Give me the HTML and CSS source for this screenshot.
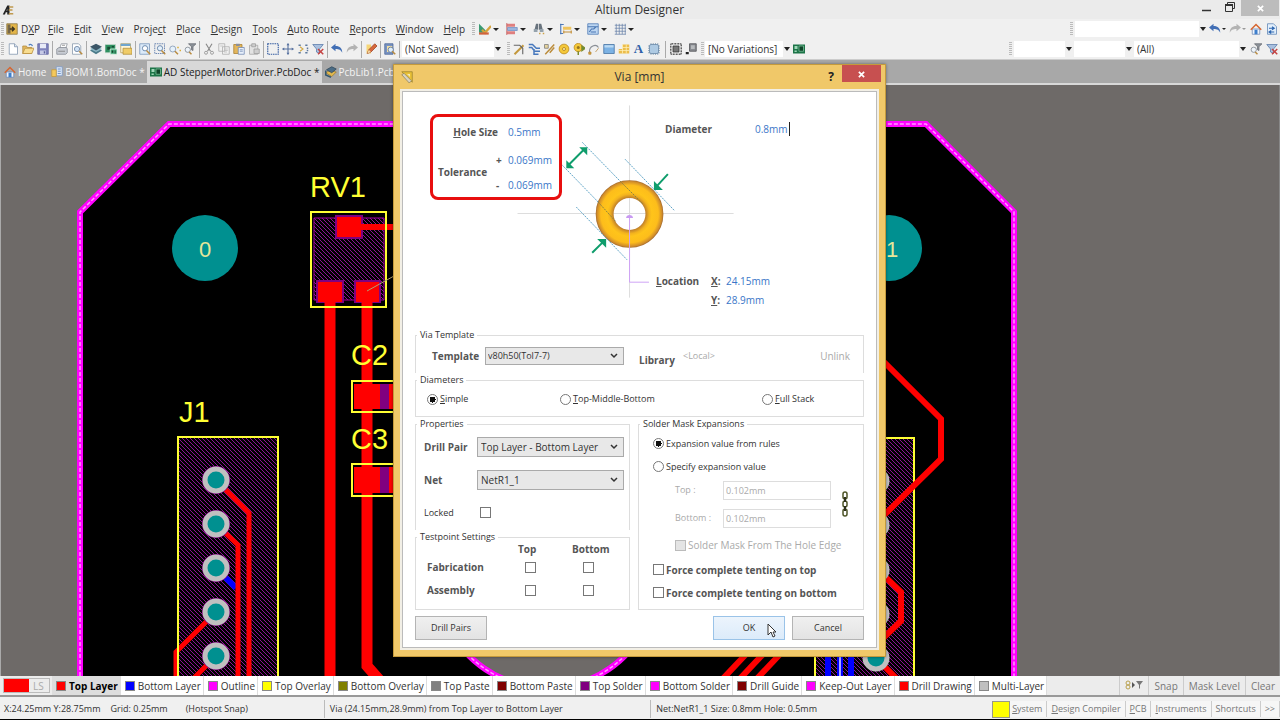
FILE: index.html
```
<!DOCTYPE html>
<html lang="en">
<head>
<meta charset="utf-8">
<title>Altium Designer</title>
<link rel="stylesheet" href="styles.css">
</head>
<body>

<!-- icon sprite -->
<svg class="sprite" width="0" height="0" aria-hidden="true">
<symbol id="i-logo" viewBox="0 0 16 16"><path d="M1 14L7 2h3v12H7v-3H5l-1 3z" fill="#222"/><path d="M9 3h6v2h-5zM9 7h5v2H9zM9 12h6v2H9z" fill="#c09a50"/><path d="M6 9l1-3v3z" fill="#ddd"/></symbol>
<symbol id="i-dxp" viewBox="0 0 16 16"><path d="M1 1h14v14H1z" fill="#e3b548" stroke="#8a7440"/><path d="M2 2h4v12H2z" fill="#75674a"/><path d="M5 8h5M8 5l3 3-3 3" fill="none" stroke="#3c3420" stroke-width="2"/></symbol>
<symbol id="i-new" viewBox="0 0 16 16"><path d="M3 1h7l4 4v10H3z" fill="#fff" stroke="#7d91ab"/><path d="M10 1v4h4" fill="#dbe5f0" stroke="#7d91ab"/></symbol>
<symbol id="i-open" viewBox="0 0 16 16"><path d="M1 14V4h5l1 2h6v8z" fill="#e3b85e" stroke="#b08a3c"/><path d="M1 14l3-7h12l-3 7z" fill="#f8dd90" stroke="#b98f3e"/><path d="M9 3c2-2 4-1 5 1" fill="none" stroke="#4f7fc0" stroke-width="1.5"/></symbol>
<symbol id="i-save" viewBox="0 0 16 16"><path d="M1 1h14v14H1z" fill="#7f83bd" stroke="#5d629c"/><path d="M4 1h8v6H4z" fill="#e8ebf7"/><path d="M4 10h8v5H4z" fill="#c6cae6"/><path d="M9 11h2v3H9z" fill="#5d629c"/></symbol>
<symbol id="i-print" viewBox="0 0 16 16"><path d="M5 7l2-6h8l-2 6z" fill="#fff" stroke="#8b9099"/><path d="M1 8l3-2h10l1 2v5l-2 2H1z" fill="#c8ccd3" stroke="#838892"/><path d="M3 11h9M8 3h4" stroke="#777"/></symbol>
<symbol id="i-preview" viewBox="0 0 16 16"><path d="M2 1h8l3 3v11H2z" fill="#fff" stroke="#8495aa"/><circle cx="8" cy="8" r="3.500" fill="#cfe2f5" stroke="#627a99"/><path d="M11 11l4 4" stroke="#b98b3f" stroke-width="2"/></symbol>
<symbol id="i-layers" viewBox="0 0 16 16"><path d="M0 10l8-4 8 4-8 5z" fill="#4c7c8a"/><path d="M0 8l8-4 8 4-8 4z" fill="#8bb7c5"/><path d="M0 5l8-4 8 4-8 5z" fill="#3c5768"/></symbol>
<symbol id="i-board" viewBox="0 0 16 16"><path d="M0 2h14v11H0z" fill="#2f9061" stroke="#c5dacd"/><path d="M3 5h4v4H3zM9 4h3v2H9z" fill="#154b32"/><path d="M7 8h9v7H7z" fill="#44aa7a" stroke="#e3f4e9"/><path d="M9 10h2v3H9zM13 10h1v4h-1z" fill="#123f2a"/></symbol>
<symbol id="i-panel" viewBox="0 0 16 16"><path d="M1 1h13v12H1z" fill="#fff8da" stroke="#b69c53"/><path d="M1 1h13v3H1z" fill="#70a6cf"/><path d="M4 7h12v8H4z" fill="#f0cc68" stroke="#ad8d3c"/></symbol>
<symbol id="i-zoomfit" viewBox="0 0 16 16"><path d="M1 1h13v14H1z" fill="#dceaf8" stroke="#7392b8"/><circle cx="8" cy="7" r="3.500" fill="#fff" stroke="#496d99"/><path d="M10 10l5 5" stroke="#b98b3f" stroke-width="2"/></symbol>
<symbol id="i-zoomarea" viewBox="0 0 16 16"><path d="M1 1h13v13H1z" fill="none" stroke="#4568a0" stroke-dasharray="2 1"/><circle cx="8" cy="7" r="3.500" fill="#e6f1fb" stroke="#496d99"/><path d="M10 10l5 5" stroke="#b98b3f" stroke-width="2"/></symbol>
<symbol id="i-zoomsel" viewBox="0 0 16 16"><circle cx="5" cy="8" r="4" fill="#e6f1fb" stroke="#7c92ad"/><path d="M8 11l4 4" stroke="#b98b3f" stroke-width="2"/><path d="M11 5h2v2h-2zM14 9h2v2h-2z" fill="#d9ad39"/></symbol>
<symbol id="i-zoomfilter" viewBox="0 0 16 16"><path d="M6 1h10l-4 4v5l-2-1V5z" fill="#8c9299" stroke="#656a70"/><circle cx="5" cy="9" r="3.500" fill="#eef4fa" stroke="#777f88"/><path d="M7 12l3 3" stroke="#b98b3f" stroke-width="2"/></symbol>
<symbol id="i-cut" viewBox="0 0 16 16"><path d="M4 1l6 10M12 1L6 11" stroke="#888" stroke-width="1.500"/><circle cx="4" cy="13" r="2" fill="none" stroke="#888"/><circle cx="12" cy="13" r="2" fill="none" stroke="#888"/></symbol>
<symbol id="i-copy" viewBox="0 0 16 16"><path d="M1 1h8v10H1zM6 5h9v10H6z" fill="#f2f2f2" stroke="#aaa"/><path d="M8 8h5M8 10h5M8 12h4M3 4h4" stroke="#bbb"/></symbol>
<symbol id="i-paste" viewBox="0 0 16 16"><path d="M1 2h11v12H1z" fill="#e3b65a" stroke="#a77d31"/><path d="M4 1h5v3H4z" fill="#8c8f99"/><path d="M7 6h8v9H7z" fill="#e8f0fb" stroke="#6d86b0"/><path d="M9 9h4M9 11h4" stroke="#6d86b0"/></symbol>
<symbol id="i-stamp" viewBox="0 0 16 16"><path d="M2 3h11v12H2z" fill="#e3e3e3" stroke="#a4a4a4"/><path d="M5 1h5v4H5zM8 8h7v6H8z" fill="#cfcfcf" stroke="#9b9b9b"/></symbol>
<symbol id="i-select" viewBox="0 0 16 16"><path d="M1 1h14v14H1z" fill="none" stroke="#335ba0" stroke-width="1.500" stroke-dasharray="2 1"/></symbol>
<symbol id="i-move" viewBox="0 0 16 16"><path d="M8 1v14M1 8h14" stroke="#5872a0" stroke-width="1.500"/><path d="M8 0l2 3H6zM8 16l2-3H6zM0 8l3-2v4zM16 8l-3-2v4z" fill="#5872a0"/></symbol>
<symbol id="i-desel" viewBox="0 0 16 16"><path d="M2 3h3M2 13h3M11 3h3M11 13h3M13 7h2M13 10h2" stroke="#5f7a9d" stroke-width="2"/><path d="M4 5l4 3-4 3" fill="none" stroke="#d2a944" stroke-width="1.500"/></symbol>
<symbol id="i-clear" viewBox="0 0 16 16"><path d="M1 2h14l-5 6v6l-4-2V8z" fill="#a9c0df" stroke="#5879a8"/><path d="M8 8l7 7M15 8l-7 7" stroke="#c54444" stroke-width="2"/></symbol>
<symbol id="i-undo" viewBox="0 0 16 16"><path d="M0 6l6-5v3c6 0 9 3 9 9-2-4-4-5-9-5v3z" fill="#426fb5"/></symbol>
<symbol id="i-redo" viewBox="0 0 16 16"><path d="M16 6l-6-5v3C4 4 1 7 1 13c2-4 4-5 9-5v3z" fill="#b3b3b3"/></symbol>
<symbol id="i-pencil" viewBox="0 0 16 16"><path d="M2 2h6v12H2z" fill="#f6d678"/><path d="M3 14l2-5 8-8 3 3-8 8z" fill="#d7683c" stroke="#9c4324"/><path d="M3 14l2-5 3 3z" fill="#f2d7a4"/></symbol>
<symbol id="i-browse" viewBox="0 0 16 16"><path d="M1 1h11v14H1z" fill="#7993c2" stroke="#4a6497"/><path d="M4 4h7v8H4z" fill="#f2dfa3"/><circle cx="9" cy="9" r="3.500" fill="#dfeefb" stroke="#506a8d"/><path d="M11 11l4 4" stroke="#b98b3f" stroke-width="2"/></symbol>
<symbol id="i-chart" viewBox="0 0 16 16"><path d="M0 1l9 9v3H0z" fill="#3a9a72"/><path d="M4 9l4 4 8-9" fill="none" stroke="#d6a43c" stroke-width="3"/><path d="M0 14h13" stroke="#d0633c" stroke-width="3"/></symbol>
<symbol id="i-align" viewBox="0 0 16 16"><path d="M1 1h11v4H1zM1 11h11v4H1z" fill="#df7f7f"/><path d="M2 6h13v4H2z" fill="#9bb5dd" stroke="#6d8fc4"/><path d="M1 0v16" stroke="#c15858"/></symbol>
<symbol id="i-find" viewBox="0 0 16 16"><path d="M2 9l2-8h3v8zM8 9V1h3l2 8z" fill="#68737d"/><path d="M1 8h5v4H1zM9 8h5v4H9z" fill="#95a2ac"/><path d="M8 13h2v2H8zM13 13h2v2h-2z" fill="#cda248"/></symbol>
<symbol id="i-dim" viewBox="0 0 16 16"><path d="M1 1v14M0 2h5M0 14h4" stroke="#4d79b9" stroke-width="1.500"/><path d="M4 5h11v4H4z" fill="#efc45e"/><path d="M5 12h10M5 10v4M15 10v4" stroke="#c38d34" stroke-width="1.500"/></symbol>
<symbol id="i-room" viewBox="0 0 16 16"><path d="M1 1h14v14H1z" fill="#bcd5f1" stroke="#4a77b3"/><path d="M1 5h14M3 12l3-4h3l3-3M5 12h7" fill="none" stroke="#4a77b3" stroke-width="1.500"/></symbol>
<symbol id="i-grid" viewBox="0 0 16 16"><path d="M3 1v14M7 1v14M11 1v14M15 1v14M1 3h15M1 7h15M1 11h15M1 15h15" stroke="#6a83aa"/></symbol>
<symbol id="i-route" viewBox="0 0 16 16"><path d="M2 15L14 3" fill="none" stroke="#c3983c" stroke-width="2.500"/><path d="M1 3h8l4 4v8" fill="none" stroke="#666" stroke-width="1.500"/></symbol>
<symbol id="i-multi" viewBox="0 0 16 16"><path d="M1 2h5l5 5h5M1 6h4l4 5h7M8 8v7h6" fill="none" stroke="#4778bd" stroke-width="2"/></symbol>
<symbol id="i-diff" viewBox="0 0 16 16"><path d="M3 15L15 2M9 13l6-7" stroke="#bb8c3b" stroke-width="2"/><path d="M2 2h5v5H2z" fill="#e6d39d" stroke="#777"/></symbol>
<symbol id="i-pad" viewBox="0 0 16 16"><circle cx="8" cy="8" r="6.500" fill="#f4c83a" stroke="#b98614"/><circle cx="8" cy="8" r="2" fill="#fff2b5" stroke="#a67613"/></symbol>
<symbol id="i-via" viewBox="0 0 16 16"><circle cx="7" cy="6" r="5.500" fill="#f4c83a" stroke="#b98614"/><circle cx="7" cy="6" r="2" fill="#96751f"/><path d="M12 4l4 3-4 3zM7 11v5" fill="#3b914f" stroke="#7d8a2f" stroke-width="2"/></symbol>
<symbol id="i-arc" viewBox="0 0 16 16"><path d="M2 13C1 3 11 1 14 6" fill="none" stroke="#8a8f96" stroke-width="1.500"/><path d="M10 12l4-5M1 12h3v3H1z" fill="#d39f35" stroke="#b98b3f"/></symbol>
<symbol id="i-fill" viewBox="0 0 16 16"><path d="M1 2h14v12H1z" fill="#7cb2e4" stroke="#3f6e9f"/><path d="M2 3h12v3H2z" fill="#bcdaf3"/></symbol>
<symbol id="i-poly" viewBox="0 0 16 16"><path d="M6 2h9v12H1V8h5z" fill="#ecbd4b"/><path d="M1 10h14M6 6h9M6 2v12M11 2v12" stroke="#fff0b7"/></symbol>
<symbol id="i-chip" viewBox="0 0 16 16"><path d="M4 0v16M7 0v16M10 0v16M13 0v16M0 4h16M0 7h16M0 10h16M0 13h16" stroke="#7d95ae"/><rect x="2" y="2" width="12" height="12" rx="2" fill="#aecae3" stroke="#6686a5"/></symbol>
<symbol id="i-comp" viewBox="0 0 16 16"><path d="M1 1h14v14H1z" fill="none" stroke="#333" stroke-width="2" stroke-dasharray="1 1"/><path d="M4 4h8v8H4z" fill="#777" stroke="#333"/></symbol>
<symbol id="i-part" viewBox="0 0 16 16"><path d="M6 1h9v10H6z" fill="#888b90" stroke="#4c4e52"/><path d="M8 3h5v5H8z" fill="#b7babd"/><path d="M1 12h4v3H1z" fill="#222"/></symbol>
<symbol id="i-home" viewBox="0 0 16 16"><path d="M3 8h10v7H3z" fill="#f1f5fc" stroke="#6b85b2"/><path d="M6 9h4v6H6z" fill="#3e7fcc"/><path d="M1 9l7-7 7 7" fill="none" stroke="#d66631" stroke-width="2"/></symbol>
<symbol id="i-docs" viewBox="0 0 16 16"><path d="M2 1h8l4 4v10H2z" fill="#e3effb" stroke="#5981b3"/><path d="M4 7h6M8 5l3 2-3 2M11 12H5M7 10l-3 2 3 2" fill="none" stroke="#2d66b1" stroke-width="1.500"/></symbol>
<symbol id="i-bom" viewBox="0 0 16 16"><path d="M7 1h8v12H7z" fill="#dbe7f7" stroke="#7a97c4"/><path d="M9 4h4M9 7h4M9 10h4" stroke="#4d7ab9"/><path d="M1 5h6v9H1z" fill="#f4c95e" stroke="#c59a39"/></symbol>
<symbol id="i-pcb" viewBox="0 0 16 16"><path d="M0 2h16v12H0z" fill="#1d7448"/><path d="M2 4h4v4H2zM2 10h3v2H2z" fill="#9fd7b8"/><path d="M8 4h6v7H8z" fill="#0f4529" stroke="#7fc49e"/></symbol>
<symbol id="i-lib" viewBox="0 0 16 16"><path d="M1 9l5-3 9 2-6 6z" fill="#e1b84f" stroke="#9c7b2c"/><path d="M2 5l7-4 6 3-6 5z" fill="#4b6c85" stroke="#2e4658"/><path d="M1 6v6l7 3" fill="none" stroke="#34576e" stroke-width="2"/></symbol>
<symbol id="i-ruler" viewBox="0 0 16 16"><path d="M1 1h14v14z" fill="#e9c136" stroke="#98802d"/><path d="M8 4h4v4z" fill="#f6e8b0"/><path d="M1 5l3-2 10 10-3 3z" fill="#d9d2c0" stroke="#8e8158"/></symbol>
</svg>

<header class="titlebar">
<svg class="icon"><use href="#i-logo"/></svg>
<h1>Altium Designer</h1>
<div class="window-buttons">
<button type="button" aria-label="Minimize"><svg viewBox="0 0 10 10" width="10" height="10"><path d="M0 8.500h9" stroke="#333" stroke-width="1.500"/></svg></button>
<button type="button" aria-label="Restore"><svg viewBox="0 0 10 10" width="10" height="10"><path d="M2.500 2V.5h7v6H8" fill="none" stroke="#333"/><path d="M.5 3h7v6.500h-7z" fill="none" stroke="#333"/><path d="M0 3h8" stroke="#333" stroke-width="2"/></svg></button>
<button type="button" class="window-close" aria-label="Close"><svg viewBox="0 0 8 8" width="7" height="7"><path d="M1 1l6 6M7 1L1 7" stroke="#fff" stroke-width="2"/></svg></button>
</div>
</header>

<nav class="menubar">
<span class="grip"></span>
<button type="button" class="menu menu-dxp"><svg class="icon"><use href="#i-dxp"/></svg><span>D<u>X</u>P</span></button>
<button type="button" class="menu"><u>F</u>ile</button>
<button type="button" class="menu"><u>E</u>dit</button>
<button type="button" class="menu"><u>V</u>iew</button>
<button type="button" class="menu">Proje<u>c</u>t</button>
<button type="button" class="menu"><u>P</u>lace</button>
<button type="button" class="menu"><u>D</u>esign</button>
<button type="button" class="menu"><u>T</u>ools</button>
<button type="button" class="menu"><u>A</u>uto Route</button>
<button type="button" class="menu"><u>R</u>eports</button>
<button type="button" class="menu"><u>W</u>indow</button>
<button type="button" class="menu"><u>H</u>elp</button>
<span class="grip menu-grip"></span>
<button type="button" class="tool drop" aria-label="Utilities"><svg class="icon"><use href="#i-chart"/></svg></button>
<button type="button" class="tool drop" aria-label="Align"><svg class="icon"><use href="#i-align"/></svg></button>
<button type="button" class="tool drop" aria-label="Find"><svg class="icon"><use href="#i-find"/></svg></button>
<button type="button" class="tool drop" aria-label="Dimensions"><svg class="icon"><use href="#i-dim"/></svg></button>
<button type="button" class="tool drop" aria-label="Rooms"><svg class="icon"><use href="#i-room"/></svg></button>
<button type="button" class="tool drop" aria-label="Grids"><svg class="icon"><use href="#i-grid"/></svg></button>
<div class="bar-end">
<span class="grip"></span>
<select class="combo combo-address" aria-label="Address"><option></option></select>
<button type="button" class="tool drop nav-drop" aria-label="Back"><svg class="icon"><use href="#i-undo"/></svg></button>
<button type="button" class="tool drop nav-drop off" aria-label="Forward"><svg class="icon"><use href="#i-redo"/></svg></button>
<button type="button" class="tool" aria-label="Home page"><svg class="icon"><use href="#i-home"/></svg></button>
<button type="button" class="tool" aria-label="Documents"><svg class="icon"><use href="#i-docs"/></svg></button>
</div>
</nav>

<div class="toolbar">
<span class="grip"></span>
<button type="button" class="tool" aria-label="New"><svg class="icon"><use href="#i-new"/></svg></button>
<button type="button" class="tool" aria-label="Open"><svg class="icon"><use href="#i-open"/></svg></button>
<button type="button" class="tool" aria-label="Save"><svg class="icon"><use href="#i-save"/></svg></button>
<span class="sep"></span>
<button type="button" class="tool" aria-label="Print"><svg class="icon"><use href="#i-print"/></svg></button>
<button type="button" class="tool" aria-label="Print preview"><svg class="icon"><use href="#i-preview"/></svg></button>
<span class="sep"></span>
<button type="button" class="tool" aria-label="Layers"><svg class="icon"><use href="#i-layers"/></svg></button>
<button type="button" class="tool" aria-label="Board"><svg class="icon"><use href="#i-board"/></svg></button>
<button type="button" class="tool" aria-label="Panels"><svg class="icon"><use href="#i-panel"/></svg></button>
<span class="sep"></span>
<button type="button" class="tool" aria-label="Fit document"><svg class="icon"><use href="#i-zoomfit"/></svg></button>
<button type="button" class="tool" aria-label="Zoom area"><svg class="icon"><use href="#i-zoomarea"/></svg></button>
<button type="button" class="tool" aria-label="Zoom selected"><svg class="icon"><use href="#i-zoomsel"/></svg></button>
<button type="button" class="tool" aria-label="Zoom filtered"><svg class="icon"><use href="#i-zoomfilter"/></svg></button>
<span class="sep"></span>
<button type="button" class="tool" aria-label="Cut"><svg class="icon"><use href="#i-cut"/></svg></button>
<button type="button" class="tool" aria-label="Copy"><svg class="icon"><use href="#i-copy"/></svg></button>
<button type="button" class="tool" aria-label="Paste"><svg class="icon"><use href="#i-paste"/></svg></button>
<button type="button" class="tool" aria-label="Rubber stamp"><svg class="icon"><use href="#i-stamp"/></svg></button>
<span class="sep"></span>
<button type="button" class="tool" aria-label="Select"><svg class="icon"><use href="#i-select"/></svg></button>
<button type="button" class="tool" aria-label="Move"><svg class="icon"><use href="#i-move"/></svg></button>
<button type="button" class="tool" aria-label="Deselect"><svg class="icon"><use href="#i-desel"/></svg></button>
<button type="button" class="tool" aria-label="Clear filter"><svg class="icon"><use href="#i-clear"/></svg></button>
<span class="sep"></span>
<button type="button" class="tool" aria-label="Undo"><svg class="icon"><use href="#i-undo"/></svg></button>
<button type="button" class="tool" aria-label="Redo"><svg class="icon"><use href="#i-redo"/></svg></button>
<span class="sep"></span>
<button type="button" class="tool" aria-label="Cross probe"><svg class="icon"><use href="#i-pencil"/></svg></button>
<span class="sep"></span>
<button type="button" class="tool" aria-label="Browse"><svg class="icon"><use href="#i-browse"/></svg></button>
<span class="sep"></span>
<select class="combo combo-view" aria-label="View"><option>(Not Saved)</option></select>
<span class="grip"></span>
<button type="button" class="tool" aria-label="Route"><svg class="icon"><use href="#i-route"/></svg></button>
<button type="button" class="tool" aria-label="Multi route"><svg class="icon"><use href="#i-multi"/></svg></button>
<button type="button" class="tool" aria-label="Differential pair"><svg class="icon"><use href="#i-diff"/></svg></button>
<button type="button" class="tool" aria-label="Pad"><svg class="icon"><use href="#i-pad"/></svg></button>
<button type="button" class="tool" aria-label="Via"><svg class="icon"><use href="#i-via"/></svg></button>
<button type="button" class="tool" aria-label="Arc"><svg class="icon"><use href="#i-arc"/></svg></button>
<button type="button" class="tool" aria-label="Fill"><svg class="icon"><use href="#i-fill"/></svg></button>
<button type="button" class="tool" aria-label="Polygon"><svg class="icon"><use href="#i-poly"/></svg></button>
<button type="button" class="tool tool-text">A</button>
<button type="button" class="tool" aria-label="Component"><svg class="icon"><use href="#i-chip"/></svg></button>
<span class="sep wide"></span>
<button type="button" class="tool" aria-label="Select component"><svg class="icon"><use href="#i-comp"/></svg></button>
<button type="button" class="tool" aria-label="Place part"><svg class="icon"><use href="#i-part"/></svg></button>
<span class="sep-space"></span>
<span class="grip"></span>
<select class="combo combo-variant" aria-label="Variant"><option>[No Variations]</option></select>
<button type="button" class="tool" aria-label="Variant board"><svg class="icon"><use href="#i-pcb"/></svg></button>
<div class="bar-end">
<span class="grip"></span>
<select class="combo combo-small" aria-label="Filter net"><option></option></select>
<select class="combo combo-small" aria-label="Filter component"><option></option></select>
<select class="combo combo-all" aria-label="Filter"><option>(All)</option></select>
<button type="button" class="tool" aria-label="Apply filter"><svg class="icon"><use href="#i-zoomfilter"/></svg></button>
<button type="button" class="tool" aria-label="Remove filter"><svg class="icon"><use href="#i-clear"/></svg></button>
</div>
</div>

<nav class="doc-tabs">
<a href="#home" class="doc-tab"><svg class="icon"><use href="#i-home"/></svg>Home</a>
<a href="#bom" class="doc-tab"><svg class="icon"><use href="#i-bom"/></svg>BOM1.BomDoc *</a>
<a href="#pcb" class="doc-tab active"><svg class="icon"><use href="#i-pcb"/></svg>AD StepperMotorDriver.PcbDoc *</a>
<a href="#lib" class="doc-tab"><svg class="icon"><use href="#i-lib"/></svg>PcbLib1.PcbLib</a>
</nav>

<main class="workspace">
<svg class="board" viewBox="0 85 1280 591" preserveAspectRatio="xMidYMid slice" role="img" aria-label="PCB layout">
<defs>
<pattern id="hatch" width="4" height="4" patternUnits="userSpaceOnUse"><path d="M-1 -1l6 6M-1 3l2 2M3 -1l2 2" stroke="#8c1494" stroke-width="1"/></pattern>
</defs>
<path d="M80 700V212L169 124H926L1014 212V700z" fill="#000"/>
<circle cx="547" cy="578" r="110" fill="#6e6a68"/>
<g fill="none">
<path d="M80 700V212L169 124H926L1014 212V700" stroke="#f0f" stroke-width="6"/>
<path d="M80 700V212L169 124H926L1014 212V700" stroke="#ff9cff" stroke-width="1.500" stroke-dasharray="4 2"/>
<circle cx="547" cy="578" r="110" stroke="#f0f" stroke-width="6"/>
<circle cx="547" cy="578" r="110" stroke="#ff9cff" stroke-width="1.500" stroke-dasharray="4 2"/>
</g>

<!-- mounting holes -->
<circle cx="205" cy="248" r="33" fill="#009090"/>
<circle cx="889" cy="248" r="33" fill="#009090"/>

<!-- RV1 -->
<path d="M314 218h70v82h-70z" fill="url(#hatch)" stroke="#a000a0"/>
<path d="M335 215h28v24h-28zM316 280h28v23h-28zM354 280h27v23h-27z" fill="#800080"/>
<g fill="none" stroke="#f00" stroke-width="11">
<path d="M330 292V700"/>
<path d="M367 292V666L390 692"/>
<path d="M350 227h50" stroke-width="6"/>
</g>
<path d="M337 217h24v20h-24zM318 282h24v20h-24zM356 282h23v20h-23z" fill="#f00"/>
<path d="M311 212h75v95h-75z" fill="none" stroke="#ff3" stroke-width="2"/>
<path d="M367 291l27-15" stroke="#b0a070"/>

<!-- C2, C3 -->
<path d="M354 384h50v25h-50zM354 467h50v26h-50z" fill="#f00"/>
<path d="M380 384h9v25h-9zM380 467h9v26h-9z" fill="#800080"/>
<path d="M352 381h60v31h-60zM352 464h60v32h-60z" fill="none" stroke="#ff3" stroke-width="2"/>

<!-- J1 -->
<path d="M178 437h100v260H178z" fill="url(#hatch)"/>
<g fill="none" stroke="#f00" stroke-width="5">
<path d="M216 568l20 20" stroke="#00f" stroke-width="6"/>
<path d="M216 480l33 33V700"/>
<path d="M216 524l22 21V700"/>
<path d="M216 612l-40 40V700"/>
<path d="M216 656l-30 30"/>
</g>
<path d="M178 437h100v260H178z" fill="none" stroke="#ff3" stroke-width="2"/>
<g fill="#009090" stroke="#c0c0c0" stroke-width="5">
<g stroke="#800080" stroke-width="10"><circle cx="216" cy="480" r="9"/><circle cx="216" cy="524" r="9"/><circle cx="216" cy="568" r="9"/><circle cx="216" cy="612" r="9"/><circle cx="216" cy="656" r="9"/></g>
<circle cx="216" cy="480" r="11"/><circle cx="216" cy="524" r="11"/><circle cx="216" cy="568" r="11"/><circle cx="216" cy="612" r="11"/><circle cx="216" cy="656" r="11"/>
</g>

<!-- right connector -->
<path d="M815 438h99v260h-99z" fill="url(#hatch)"/>
<path d="M815 438h99v260h-99z" fill="none" stroke="#ff3" stroke-width="2"/>
<path d="M828 630v60M840 630v60M851 630v60" stroke="#00f" stroke-width="6"/>
<path d="M840 630v60" stroke="#aaf" stroke-width="2"/>
<g fill="none" stroke="#f00" stroke-width="6">
<path d="M870 348l71 71v40l-71 70"/>
<path d="M876 568l25 24v29l-25 24"/>
<path d="M876 658l30 30M750 650l-34 36M767 650l-34 36M784 650l-34 36"/>
</g>
<g fill="#009090" stroke="#c0c0c0" stroke-width="5">
<circle cx="876" cy="481" r="11"/><circle cx="876" cy="525" r="11"/><circle cx="876" cy="570" r="11"/><circle cx="876" cy="614" r="11"/><circle cx="876" cy="658" r="11"/>
</g>

<!-- designators -->
<g class="designator">
<text x="310" y="197">RV1</text>
<text x="351" y="365">C2</text>
<text x="351" y="449">C3</text>
<text x="179" y="422">J1</text>
</g>
<g class="hole-number">
<text x="199" y="257">0</text>
<text x="886" y="257">1</text>
</g>
</svg>
</main>

<nav class="layer-tabs">
<button type="button" class="layer-set"><span></span>LS</button>
<button type="button" class="layer active"><i class="swatch red"></i>Top Layer</button>
<button type="button" class="layer"><i class="swatch blue"></i>Bottom Layer</button>
<button type="button" class="layer"><i class="swatch magenta"></i>Outline</button>
<button type="button" class="layer"><i class="swatch yellow"></i>Top Overlay</button>
<button type="button" class="layer"><i class="swatch olive"></i>Bottom Overlay</button>
<button type="button" class="layer"><i class="swatch gray"></i>Top Paste</button>
<button type="button" class="layer"><i class="swatch maroon"></i>Bottom Paste</button>
<button type="button" class="layer"><i class="swatch purple"></i>Top Solder</button>
<button type="button" class="layer"><i class="swatch magenta"></i>Bottom Solder</button>
<button type="button" class="layer"><i class="swatch maroon"></i>Drill Guide</button>
<button type="button" class="layer"><i class="swatch magenta"></i>Keep-Out Layer</button>
<button type="button" class="layer"><i class="swatch red"></i>Drill Drawing</button>
<button type="button" class="layer"><i class="swatch silver"></i>Multi-Layer</button>
<div class="layer-actions">
<button type="button" aria-label="Filter options"><svg viewBox="0 0 18 10" width="18" height="10"><circle cx="3" cy="3" r="2" fill="none" stroke="#b8a04c"/><circle cx="3" cy="7" r="2" fill="none" stroke="#b8a04c"/><path d="M7 2l3 3-3 3z" fill="#555"/><path d="M11 1h7l-3 4v4l-1-1V5z" fill="#777"/></svg></button>
<button type="button">Snap</button>
<button type="button">Mask Level</button>
<button type="button">Clear</button>
</div>
</nav>

<footer class="statusbar">
<div class="pane pane-pos"><span>X:24.25mm Y:28.75mm</span><span>Grid: 0.25mm</span><span class="snap">(Hotspot Snap)</span></div>
<div class="pane pane-via">Via (24.15mm,28.9mm) from Top Layer to Bottom Layer</div>
<div class="pane">Net:NetR1_1 Size: 0.8mm Hole: 0.5mm</div>
<div class="panels">
<span class="marker"></span>
<button type="button"><u>S</u>ystem</button>
<button type="button"><u>D</u>esign Compiler</button>
<button type="button"><u>P</u>CB</button>
<button type="button"><u>I</u>nstruments</button>
<button type="button">Shortcuts</button>
<button type="button">&gt;&gt;</button>
</div>
</footer>

<form class="dialog" role="dialog" aria-labelledby="dialog-title">
<div class="dialog-title">
<svg class="icon"><use href="#i-ruler"/></svg>
<h2 id="dialog-title">Via [mm]</h2>
<button type="button" class="help">?</button>
<button type="button" class="dialog-close" aria-label="Close"><svg viewBox="0 0 8 8" width="7" height="7"><path d="M1 1l6 6M7 1L1 7" stroke="#fff" stroke-width="2"/></svg></button>
</div>
<div class="dialog-body">

<div class="via-figure">
<svg class="via-drawing" viewBox="403 92 475 237" aria-hidden="true">
<defs>
<radialGradient id="copper" gradientUnits="userSpaceOnUse" cx="630.5" cy="214" r="34">
<stop offset=".46" stop-color="#b8782c"/><stop offset=".58" stop-color="#f3b31e"/><stop offset=".66" stop-color="#ffc41a"/><stop offset=".85" stop-color="#fdbd1b"/><stop offset=".96" stop-color="#cf8b2b"/><stop offset="1" stop-color="#9f682e"/>
</radialGradient>
</defs>
<path d="M630.500 105v193M518 213.500h217" stroke="#ddd"/>
<circle cx="630.5" cy="214" r="25" fill="none" stroke="url(#copper)" stroke-width="18"/>
<g stroke="#5fa3c6" stroke-width="1" stroke-dasharray="2 1">
<path d="M626 159l50 52M577 207l51 53M583 142l38 39M562 164l37 38"/>
<path d="M621 181l23 23M599 202l18 20" stroke="#8a8340"/>
</g>
<g fill="#0f9d6c" stroke="#0f9d6c" stroke-width="2">
<path d="M569 165l16-16M669 174l-12 13M593 253l12-12"/>
<path d="M588 147v8l-8-8zM567 168v-8l8 8zM655 190v-9l9 9zM607 239v9l-9-9z" stroke="none"/>
</g>
<path d="M630.500 217v65.500H650" fill="none" stroke="#cfa3f5"/>
<path d="M627 218c0-4 7-4 7 0z" fill="#c99af2"/>
</svg>

<div class="hole-box">
<label class="hole-label" for="hole"><u>H</u>ole Size</label>
<input id="hole" type="text" value="0.5mm">
<span class="tolerance">Tolerance</span>
<label for="tol-plus">+</label>
<input id="tol-plus" type="text" value="0.069mm">
<label for="tol-minus">-</label>
<input id="tol-minus" type="text" value="0.069mm">
</div>

<div class="diameter">
<label for="diameter">Diameter</label>
<input id="diameter" type="text" value="0.8mm">
</div>

<div class="location">
<span class="location-name"><u>L</u>ocation</span>
<label for="loc-x"><u>X</u>:</label>
<input id="loc-x" type="text" value="24.15mm">
<label for="loc-y"><u>Y</u>:</label>
<input id="loc-y" type="text" value="28.9mm">
</div>
</div>

<fieldset class="group open-bottom template">
<legend>Via Template</legend>
<label class="strong" for="template">Template</label>
<select id="template" class="field"><option>v80h50(Tol7-7)</option></select>
<span class="strong library">Library</span>
<span class="local">&lt;Local&gt;</span>
<button type="button" class="unlink" disabled>Unlink</button>
</fieldset>

<fieldset class="group diameters">
<legend>Diameters</legend>
<label><input type="radio" name="diameters" checked><span><u>S</u>imple</span></label>
<label><input type="radio" name="diameters"><span><u>T</u>op-Middle-Bottom</span></label>
<label><input type="radio" name="diameters"><span><u>F</u>ull Stack</span></label>
</fieldset>

<div class="columns">
<div class="column">
<fieldset class="group open-bottom properties">
<legend>Properties</legend>
<label class="strong" for="drill-pair">Drill Pair</label>
<select id="drill-pair" class="field big"><option>Top Layer - Bottom Layer</option></select>
<label class="strong" for="net">Net</label>
<select id="net" class="field big"><option>NetR1_1</option></select>
<label for="locked">Locked</label>
<input id="locked" type="checkbox">
</fieldset>

<fieldset class="group testpoints">
<legend>Testpoint Settings</legend>
<table>
<thead><tr><td></td><th scope="col">Top</th><th scope="col">Bottom</th></tr></thead>
<tbody>
<tr><th scope="row">Fabrication</th><td><input type="checkbox" aria-label="Fabrication top"></td><td><input type="checkbox" aria-label="Fabrication bottom"></td></tr>
<tr><th scope="row">Assembly</th><td><input type="checkbox" aria-label="Assembly top"></td><td><input type="checkbox" aria-label="Assembly bottom"></td></tr>
</tbody>
</table>
</fieldset>
</div>

<fieldset class="group mask">
<legend>Solder Mask Expansions</legend>
<label><input type="radio" name="expansion" checked>Expansion value from rules</label>
<label><input type="radio" name="expansion">Specify expansion value</label>
<div class="expansion">
<label for="exp-top">Top :</label>
<input id="exp-top" type="text" value="0.102mm" disabled>
<svg class="chain" viewBox="0 0 8 26" width="8" height="26" aria-hidden="true"><g fill="none" stroke="#4f5628" stroke-width="1.500"><rect x="2" y="1" width="4" height="7" rx="2"/><rect x="2" y="18" width="4" height="7" rx="2"/><rect x="2" y="10" width="4" height="6" rx="2"/><path d="M4 6v5M4 15v5" stroke="#2d301c" stroke-width="2"/></g></svg>
<label for="exp-bottom">Bottom :</label>
<input id="exp-bottom" type="text" value="0.102mm" disabled>
</div>
<label class="hole-edge"><input type="checkbox" disabled>Solder Mask From The Hole Edge</label>
<label class="strong"><input type="checkbox">Force complete tenting on top</label>
<label class="strong"><input type="checkbox">Force complete tenting on bottom</label>
</fieldset>
</div>

<div class="dialog-buttons">
<button type="button">Drill Pairs</button>
<button type="submit" class="ok">OK
<svg class="pointer" viewBox="0 0 10 15" width="10" height="15" aria-hidden="true"><path d="M1 1v11l3-3 2 5 2-1-2-4h3z" fill="#fff" stroke="#333"/></svg>
</button>
<button type="button">Cancel</button>
</div>
</div>
</form>

</body>
</html>
```

FILE: styles.css
```
* {
    box-sizing: border-box;
}

body {
    margin: 0;
    height: 100vh;
    display: flex;
    flex-direction: column;
    overflow: hidden;
    background: #f0f0f0;
    border-bottom: 1px solid #000;
    font-family: "Open Sans", "Noto Sans", sans-serif;
    font-size: 10px;
    line-height: 14px;
    color: #333;
}

button, select, input {
    font: inherit;
    color: inherit;
    margin: 0;
    padding: 0;
    border: 0;
    background: none;
    border-radius: 0;
}

h1, h2 {
    margin: 0;
    font-size: 12px;
    font-weight: normal;
    text-align: center;
}

.sprite {
    position: absolute;
}

.icon {
    width: 12px;
    height: 12px;
    flex: none;
    display: block;
}

/* window title */

.titlebar {
    display: flex;
    align-items: center;
    height: 19px;
    padding-left: 2px;
    background: #ebebeb;
}

.titlebar h1 {
    flex: 1;
    padding-left: 70px;
}

.window-buttons {
    display: flex;
    align-self: flex-start;
}

.window-buttons button {
    width: 23px;
    height: 16px;
}

.window-buttons .window-close {
    width: 38px;
    background: #bcbcbc;
    margin-right: 1px;
}

/* menu and toolbars */

.menubar, .toolbar {
    display: flex;
    align-items: center;
    height: 20px;
    padding-left: 1px;
    background: #f0f0f0;
}

.toolbar {
    height: 21px;
    border-bottom: 1px solid #ccc;
}

.grip {
    width: 3px;
    height: 14px;
    margin-right: 1px;
    background: repeating-linear-gradient(#bbb 0 1px, transparent 1px 2px);
}

.menu-grip {
    margin-left: 2px;
}

.menu {
    padding: 0 5px;
}

.menu-dxp {
    display: flex;
    align-items: center;
    gap: 3px;
    padding: 0 3px 0 1px;
}

.tool {
    width: 15px;
    height: 16px;
    display: flex;
    align-items: center;
    justify-content: center;
    flex: none;
}

.tool-text {
    font: bold 13px/14px "Liberation Serif", serif;
    color: #2f5fa8;
}

.drop {
    width: 27px;
    justify-content: space-between;
    padding: 0 4px 0 3px;
}

.drop::after {
    content: "";
    border: 3px solid transparent;
    border-top-color: #222;
    border-bottom: 0;
}

.nav-drop {
    width: 19px;
    padding: 0 1px;
}

.nav-drop::after {
    border-width: 2px;
    border-bottom: 0;
}

.off::after {
    border-top-color: #999;
}

.sep {
    width: 1px;
    height: 17px;
    margin: 0 1px 0 2px;
    background: #aaa;
}

.wide {
    margin: 0 2px 0 4px;
}

.sep-space {
    width: 3px;
}

.bar-end {
    display: flex;
    align-items: center;
    gap: 1px;
    margin-left: auto;
    padding-right: 1px;
}

.combo {
    appearance: none;
    height: 16px;
    padding: 0 12px 0 3px;
    background: #fff url("data:image/svg+xml,%3Csvg xmlns='http://www.w3.org/2000/svg' width='8' height='16'%3E%3Cpath fill='%23f0f0f0' d='M0 0h8v16H0z'/%3E%3Cpath fill='%23222' d='M1 6h6L4 10z'/%3E%3C/svg%3E") no-repeat right center;
}

.combo-address {
    width: 132px;
}

.combo-view {
    width: 100px;
    margin: 0 5px 0 1px;
}

.combo-variant {
    width: 86px;
}

.combo-small {
    width: 59px;
}

.combo-all {
    width: 113px;
}

/* document tabs */

.doc-tabs {
    display: flex;
    height: 25px;
    padding: 1px 0 0 1px;
    background: #a8a8a8;
    border-bottom: 2px solid #d8d8d8;
}

.doc-tab {
    display: flex;
    align-items: center;
    gap: 2px;
    padding: 0 2px 0 3px;
    color: #f4f4f4;
    text-decoration: none;
    white-space: nowrap;
}

.doc-tab.active {
    background: #d8d8d8;
    color: #222;
}

/* board view */

.workspace {
    flex: 1;
    min-height: 0;
    background: #6e6a68;
    border-left: 1px solid #aaa;
    border-right: 1px solid #888;
}

.board {
    display: block;
    width: 100%;
    height: 100%;
}

.designator {
    font: 29px "Liberation Sans", sans-serif;
    fill: #ff3;
}

.hole-number {
    font: 22px "Liberation Sans", sans-serif;
    fill: #e6e69a;
}

/* layer tabs */

.layer-tabs {
    display: flex;
    height: 21px;
    padding-left: 2px;
    background: #ececec;
    border-bottom: 2px solid #999;
    white-space: nowrap;
}

.layer-set {
    display: flex;
    align-items: center;
    width: 47px;
    height: 15px;
    margin: 2px 2px 0 1px;
    gap: 4px;
    border: 1px solid #bbb;
    color: #aaa;
}

.layer-set span {
    width: 25px;
    height: 13px;
    background: #f00;
}

.layer {
    display: flex;
    align-items: center;
    gap: 3px;
    padding: 0 2px 0 4px;
    background: #fff;
    border-right: 1px solid #ddd;
}

.layer.active {
    background: #ddd;
    font-weight: bold;
    color: #000;
}

.swatch {
    width: 10px;
    height: 10px;
    border: 1px solid #888;
}

.red { background: #f00; }
.blue { background: #00f; }
.magenta { background: #f0f; }
.yellow { background: #ff0; }
.olive { background: #808000; }
.gray { background: #808080; }
.maroon { background: #800000; }
.purple { background: #800080; }
.silver { background: #c0c0c0; }

.layer-actions {
    display: flex;
    margin-left: auto;
    color: #777;
}

.layer-actions button {
    padding: 0 5px;
    border-left: 1px solid #ccc;
}

/* status bar */

.statusbar {
    display: flex;
    align-items: center;
    height: 22px;
    padding-top: 2px;
    font-size: 9px;
    white-space: nowrap;
}

.pane {
    padding-left: 5px;
    line-height: 18px;
}

.pane + .pane {
    border-left: 1px solid #bbb;
}

.pane-pos {
    display: flex;
    gap: 10px;
    width: 25.3%;
    padding-left: 4px;
}

.snap {
    padding-left: 8px;
}

.pane-via {
    width: 25.5%;
}

.panels {
    display: flex;
    align-items: center;
    margin-left: auto;
    color: #777;
}

.panels button {
    height: 16px;
    padding: 0 4px;
    border-right: 1px solid #ccc;
    background: #f6f6f6;
}

.panels .marker + button {
    padding-left: 2px;
}

.marker {
    width: 18px;
    height: 17px;
    background: #ff0;
    border: 1px solid #998;
}

/* via dialog */

.dialog {
    position: absolute;
    top: 64px;
    left: calc(50% - 247px);
    width: 493px;
    padding: 0 6px 6px;
    background: #f0c869;
    border: 1px solid #c49a3c;
    box-shadow: 0 0 3px rgba(0,0,0,0.4);
}

.dialog-title {
    display: flex;
    align-items: center;
    height: 24px;
    margin-right: -2px;
    padding-left: 1px;
}

.dialog-title h2 {
    flex: 1;
    padding-left: 46px;
}

.help {
    width: 22px;
    font-size: 12px;
    font-weight: bold;
    color: #222;
}

.dialog-close {
    align-self: flex-start;
    width: 39px;
    height: 17px;
    background: #c75050;
}

.dialog-body {
    padding: 0 12px 7px;
    background: #fff;
    border: 1px solid #bbb;
    outline: 2px solid #f2efe6;
    margin: 2px;
}

.via-figure {
    position: relative;
    height: 237px;
    margin: 0 -12px;
    font-weight: bold;
    color: #555;
}

.via-drawing {
    display: block;
    width: 100%;
    height: 100%;
}

.via-figure input {
    width: 48px;
    font-weight: normal;
    color: #3a76c8;
}

/* labels placed on the drawing */
.hole-box {
    position: absolute;
    left: 27px;
    top: 22px;
    width: 132px;
    display: grid;
    grid-template-columns: 63px 12px 48px;
    grid-template-rows: 30px 26px 24px;
    align-items: center;
    border: 3px solid #e80f0f;
    border-radius: 8px;
}

.hole-label {
    grid-column: span 2;
    padding-right: 10px;
    text-align: right;
}

.tolerance {
    grid-row: span 2;
    padding-left: 5px;
}

.diameter {
    position: absolute;
    left: 262px;
    top: 30px;
    display: flex;
    gap: 43px;
}

.via-figure .diameter input {
    width: 35px;
    border-right: 1px solid #222;
}

.location {
    position: absolute;
    left: 253px;
    top: 182px;
    display: grid;
    grid-template-columns: 55px 15px 50px;
    row-gap: 5px;
}

.location label {
    grid-column: 2;
}

/* group boxes */

.group {
    margin: 0;
    padding: 0;
    min-width: 0;
    border: 1px solid #ddd;
    font-size: 9px;
}

.group legend {
    margin-left: 1px;
    padding: 0 3px;
    line-height: 12px;
}

.open-bottom {
    border-bottom: 0;
}

.group .strong {
    font-size: 10px;
    font-weight: bold;
    color: #555;
}

.group > label {
    display: flex;
    align-items: center;
}

.field {
    appearance: none;
    height: 18px;
    padding: 0 16px 0 2px;
    border: 1px solid #aaa;
    background: #e8e8e8 url("data:image/svg+xml,%3Csvg xmlns='http://www.w3.org/2000/svg' width='14' height='8'%3E%3Cpath fill='none' stroke='%23333' stroke-width='1.5' d='M2 2l3 3 3-3'/%3E%3C/svg%3E") no-repeat right center;
}

.big {
    height: 20px;
    padding-left: 3px;
    font-size: 10px;
}

input[type="radio"], input[type="checkbox"] {
    appearance: none;
    width: 11px;
    height: 11px;
    flex: none;
    border: 1px solid #777;
    background: #fff;
}

input[type="radio"] {
    border-radius: 50%;
}

input[type="radio"]:checked {
    background: radial-gradient(circle, #111 0 3px, #fff 3px);
}

input[type="checkbox"]:disabled {
    background: #e4e4e4;
    border-color: #bbb;
}

.group label input {
    margin-right: 2px;
}

.template {
    display: grid;
    grid-template-columns: 53px 139px 44px 1fr auto;
    align-items: center;
    height: 44px;
    padding: 0 13px 3px 16px;
}

.template legend {
    margin-left: -15px;
}

.template .library {
    padding: 8px 0 0 15px;
}

.local {
    padding-left: 15px;
    color: #aaa;
}

.template .library, .local {
    white-space: nowrap;
}

.unlink {
    font-size: 10px;
    color: #aaa;
}

.diameters {
    display: grid;
    grid-template-columns: 133px 202px 1fr;
    height: 43px;
    margin-top: 1px;
    padding: 0 0 4px 11px;
}

.diameters legend {
    margin-left: -10px;
}

.columns {
    display: grid;
    grid-template-columns: 215px 1fr;
    column-gap: 8px;
    margin-top: 1px;
}

.properties {
    display: grid;
    grid-template-columns: 53px 147px;
    grid-auto-rows: 33px;
    align-items: center;
    padding: 0 4px 0 8px;
    height: 112px;
}

.properties legend {
    margin-left: -7px;
}

.properties input {
    margin-left: 3px;
}

.testpoints {
    height: 79px;
    margin-top: 1px;
}

.testpoints table {
    border-spacing: 0;
    margin-left: 11px;
    font-size: 10px;
    line-height: 13px;
    color: #555;
}

.testpoints th, .testpoints td {
    width: 54px;
    height: 23px;
    padding: 0;
    text-align: left;
}

.testpoints thead th, .testpoints thead td {
    height: 13px;
}

.testpoints thead td, .testpoints tbody th {
    width: 91px;
}

.testpoints td input {
    display: block;
    margin-left: 7px;
}

.testpoints td + td input {
    margin-left: 11px;
}

.mask {
    padding: 2px 0 0 14px;
}

.mask legend {
    margin-left: -13px;
}

.mask > label {
    height: 23px;
}

.expansion {
    display: grid;
    grid-template-columns: 48px 108px 28px;
    grid-template-rows: 28px 28px;
    align-items: center;
    margin-top: -2px;
    padding-left: 22px;
    color: #aaa;
}

.expansion input {
    height: 19px;
    padding-left: 2px;
    border: 1px solid #ddd;
}

.chain {
    grid-column: 3;
    grid-row: 1 / 3;
    justify-self: center;
}

.mask .hole-edge {
    height: 26px;
    padding-left: 22px;
    font-size: 10px;
    color: #aaa;
}

.dialog-buttons {
    display: flex;
    gap: 7px;
    margin-top: 6px;
}

.dialog-buttons button {
    width: 72px;
    height: 24px;
    font-size: 9px;
    border: 1px solid #b4b4b4;
    background: linear-gradient(#f0f0f0, #e3e3e3);
}

.dialog-buttons .ok {
    position: relative;
    margin-left: auto;
    border-color: #9ac3e8;
    background: linear-gradient(#ecf4fc, #dcebfa);
}

.pointer {
    position: absolute;
    left: 53px;
    top: 6px;
}
```
